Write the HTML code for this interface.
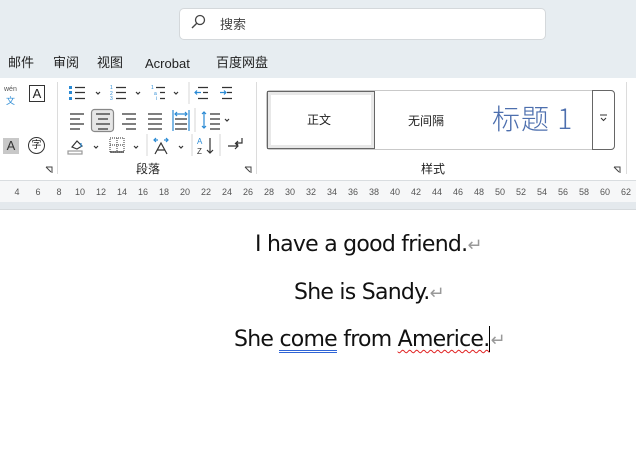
<!DOCTYPE html>
<html><head><meta charset="utf-8"><style>
*{margin:0;padding:0;box-sizing:border-box}
body{width:636px;height:456px;overflow:hidden;background:#fff;font-family:"Liberation Sans","Noto Sans CJK SC",sans-serif;position:relative}
.a{position:absolute}
.top{left:0;top:0;width:636px;height:78px;background:#e7edf1}
.menu{top:54px;font-size:13px;color:#222;line-height:18px;height:18px}
.rib{left:0;top:78px;width:636px;height:102px;background:#fff}
.sep{background:#dcdcdc;width:1px}
.ruler{left:0;top:180px;width:636px;height:24px;background:#f6f7f8;border-top:1px solid #d9dde0}
.rgap{left:0;top:202px;width:636px;height:8px;background:#e4e9ed;border-bottom:1px solid #d6dadd}
.rn{top:187px;font-size:9px;color:#555;width:20px;text-align:center}
.doc{font-size:22px;color:#111;font-family:"DejaVu Sans","Liberation Sans",sans-serif;letter-spacing:-0.75px;white-space:nowrap}
.ret{color:#999;font-size:18px;letter-spacing:0}
</style></head><body>
<div class="a top"></div>
<div class="a" style="left:179px;top:8px;width:367px;height:32px;background:#fff;border:1px solid #d4d8db;border-radius:5px"></div>
<svg class="a" style="left:190px;top:14px" width="16" height="16"><circle cx="10" cy="6" r="4.5" fill="none" stroke="#444" stroke-width="1.3"/><line x1="6.8" y1="9.2" x2="2" y2="14" stroke="#444" stroke-width="1.4"/></svg>
<div class="a" style="left:220px;top:14px;font-size:13px;color:#444">搜索</div>
<div class="a menu" style="left:8px">邮件</div>
<div class="a menu" style="left:53px">审阅</div>
<div class="a menu" style="left:97px">视图</div>
<div class="a menu" style="left:145px;top:55px">Acrobat</div>
<div class="a menu" style="left:216px">百度网盘</div>
<div class="a rib"></div>
<div class="a" style="left:4px;top:86px;font-size:7px;color:#555">wén</div>
<div class="a" style="left:6px;top:94px;font-size:9px;color:#2a8ad4">文</div>
<div class="a" style="left:29px;top:85px;width:16px;height:17px;border:1px solid #333;font-size:13px;text-align:center;line-height:15px;color:#222">A</div>
<div class="a" style="left:3px;top:138px;width:16px;height:16px;background:#c8c8c8;font-size:13px;text-align:center;line-height:16px;color:#333">A</div>
<div class="a" style="left:28px;top:137px;width:17px;height:17px;border:1px solid #333;border-radius:50%;font-size:10px;text-align:center;line-height:15px;color:#222">字</div>
<svg class="a" style="left:45px;top:166px" width="8" height="8"><path d="M1 1h6v6M1 1l5 5" stroke="#444" fill="none"/></svg>
<div class="a sep" style="left:57px;top:82px;height:92px"></div>
<svg class="a" style="left:64px;top:80px" width="190" height="80" stroke-width="1.2" fill="none">
 <rect x="5" y="6" width="3" height="3" fill="#2a8ad4"/><rect x="5" y="11" width="3" height="3" fill="#2a8ad4"/><rect x="5" y="17" width="3" height="3" fill="#2a8ad4"/>
 <path d="M11 7.5h10M11 12.5h10M11 18.5h10" stroke="#333"/>
 <path d="M32 12l2 2 2-2" stroke="#333"/>
 <text x="46" y="9" font-size="5" fill="#2a8ad4" stroke="none">1</text><text x="46" y="15" font-size="5" fill="#2a8ad4" stroke="none">2</text><text x="46" y="20" font-size="5" fill="#2a8ad4" stroke="none">3</text>
 <path d="M52 7.5h10M52 12.5h10M52 18.5h10" stroke="#333"/>
 <path d="M72 12l2 2 2-2" stroke="#333"/>
 <text x="87" y="9" font-size="5" fill="#2a8ad4" stroke="none">1</text><text x="90" y="15" font-size="5" fill="#2a8ad4" stroke="none">a</text><text x="92" y="20" font-size="5" fill="#2a8ad4" stroke="none">i</text>
 <path d="M92 7.5h9M96 12.5h5M96 18.5h5" stroke="#333"/>
 <path d="M110 12l2 2 2-2" stroke="#333"/>
 <path d="M125 2v22" stroke="#ddd"/>
 <path d="M134 7.5h10M139 12.5h5M134 18.5h10" stroke="#333"/><path d="M131 12.5h6M133 10.5l-2 2 2 2" stroke="#2a8ad4"/>
 <path d="M158 7.5h10M163 12.5h5M158 18.5h10" stroke="#333"/><path d="M156 12.5h6M160 10.5l2 2-2 2" stroke="#2a8ad4"/>
 <path d="M6 34h14M6 39h10M6 44h14M6 49h10" stroke="#333"/>
 <rect x="27.5" y="29.5" width="22" height="22" rx="3" fill="#e6e6e6" stroke="#888"/>
 <path d="M32 34h14M34 39h10M32 44h14M34 49h10" stroke="#333"/>
 <path d="M58 34h14M62 39h10M58 44h14M62 49h10" stroke="#333"/>
 <path d="M84 34h14M84 39h14M84 44h14M84 49h14" stroke="#333"/>
 <path d="M109 30v21M125 30v21" stroke="#2a8ad4"/><path d="M111 34h12M113 32l-2 2 2 2M121 32l2 2-2 2" stroke="#2a8ad4"/><path d="M111 39h12M111 44h12M111 49h12" stroke="#333"/>
 <path d="M131 28v24" stroke="#ddd"/>
 <path d="M140 32v16M138 34l2-2 2 2M138 46l2 2 2-2" stroke="#2a8ad4"/><path d="M146 34h10M146 39h10M146 44h10M146 49h10" stroke="#333"/>
 <path d="M161 39l2 2 2-2" stroke="#333"/>
 <path d="M8 67l5-6 5 5-5 3z" stroke="#333"/><path d="M17 63v4" stroke="#2a8ad4"/><rect x="4" y="71" width="14" height="3" stroke="#999"/>
 <path d="M30 66l2 2 2-2" stroke="#333"/>
 <rect x="46" y="58" width="14" height="14" stroke="#555" stroke-dasharray="1 1"/><path d="M53 58v14M46 65h14" stroke="#555" stroke-dasharray="1 1"/><path d="M46 72h14" stroke="#222"/>
 <path d="M70 66l2 2 2-2" stroke="#333"/>
 <path d="M83 54v22" stroke="#ddd"/>
 <path d="M91 74l6-11 6 11M93 70h8" stroke="#333"/><path d="M90 60h4M92 58l-2 2 2 2M100 60h4M102 58l2 2-2 2" stroke="#2a8ad4"/>
 <path d="M115 66l2 2 2-2" stroke="#333"/>
 <path d="M128 54v22" stroke="#ddd"/>
 <text x="133" y="64" font-size="8" fill="#2a8ad4" stroke="none">A</text><text x="133" y="74" font-size="8" fill="#333" stroke="none">Z</text>
 <path d="M146 58v15M143 70l3 3 3-3" stroke="#333"/>
 <path d="M156 54v22" stroke="#ddd"/>
 <path d="M164 66h10M171 63l3 3-3 3M178 58v5h-6M174 61l-2 2 2 2" stroke="#333"/>
</svg>
<div class="a" style="left:136px;top:160px;font-size:12px;color:#222">段落</div>
<svg class="a" style="left:244px;top:166px" width="8" height="8"><path d="M1 1h6v6M1 1l5 5" stroke="#444" fill="none"/></svg>
<div class="a sep" style="left:256px;top:82px;height:92px"></div>
<div class="a" style="left:266px;top:90px;width:349px;height:60px;border:1px solid #c9c9c9;border-radius:4px"></div>
<div class="a" style="left:267px;top:91px;width:108px;height:58px;border:1px solid #666;background:#fff;box-shadow:inset 0 0 0 3px #e8e8e8"></div>
<div class="a" style="left:307px;top:111px;font-size:12px;color:#222">正文</div>
<div class="a" style="left:408px;top:112px;font-size:12px;color:#222">无间隔</div>
<div class="a" style="left:492px;top:101px;font-size:28px;color:#4d6fae;font-weight:200;letter-spacing:1px;font-family:'Noto Sans CJK SC','Liberation Sans',sans-serif;line-height:34px">标题 1</div>
<div class="a" style="left:592px;top:90px;width:23px;height:60px;border:1px solid #666;border-radius:0 4px 4px 0;background:#fff"></div>
<svg class="a" style="left:599px;top:114px" width="9" height="8"><path d="M1 1h7M2 4l2.5 2.5L7 4" stroke="#333" fill="none"/></svg>
<div class="a" style="left:421px;top:160px;font-size:12px;color:#222">样式</div>
<svg class="a" style="left:613px;top:166px" width="8" height="8"><path d="M1 1h6v6M1 1l5 5" stroke="#444" fill="none"/></svg>
<div class="a sep" style="left:626px;top:82px;height:92px"></div>
<div class="a ruler"></div>
<div class="a rgap"></div>
<div class="a rn" style="left:7px">4</div><div class="a rn" style="left:28px">6</div><div class="a rn" style="left:49px">8</div><div class="a rn" style="left:70px">10</div><div class="a rn" style="left:91px">12</div><div class="a rn" style="left:112px">14</div><div class="a rn" style="left:133px">16</div><div class="a rn" style="left:154px">18</div><div class="a rn" style="left:175px">20</div><div class="a rn" style="left:196px">22</div><div class="a rn" style="left:217px">24</div><div class="a rn" style="left:238px">26</div><div class="a rn" style="left:259px">28</div><div class="a rn" style="left:280px">30</div><div class="a rn" style="left:301px">32</div><div class="a rn" style="left:322px">34</div><div class="a rn" style="left:343px">36</div><div class="a rn" style="left:364px">38</div><div class="a rn" style="left:385px">40</div><div class="a rn" style="left:406px">42</div><div class="a rn" style="left:427px">44</div><div class="a rn" style="left:448px">46</div><div class="a rn" style="left:469px">48</div><div class="a rn" style="left:490px">50</div><div class="a rn" style="left:511px">52</div><div class="a rn" style="left:532px">54</div><div class="a rn" style="left:553px">56</div><div class="a rn" style="left:574px">58</div><div class="a rn" style="left:595px">60</div><div class="a rn" style="left:616px">62</div>
<div class="a doc" style="left:255px;top:232px">I have a good friend.<span class="ret">↵</span></div>
<div class="a doc" style="left:294px;top:280px">She is Sandy.<span class="ret">↵</span></div>
<div class="a doc" style="left:234px;top:326px">She <span style="border-bottom:3px double #2f64d6;line-height:20px;display:inline-block">come</span> from <span style="text-decoration:underline wavy #e02020;text-decoration-thickness:1px;text-underline-offset:3px">Americe.</span><span style="display:inline-block;width:1px;height:26px;background:#000;vertical-align:-6px"></span><span class="ret">↵</span></div>
</body></html>
